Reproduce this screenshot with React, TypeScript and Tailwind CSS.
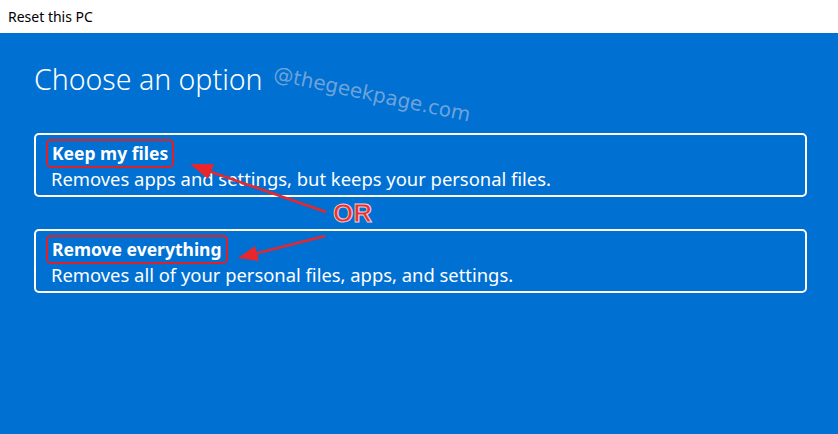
import React from 'react';

const options = [
  { title: 'Keep my files', detail: 'Removes apps and settings, but keeps your personal files.' },
  { title: 'Remove everything', detail: 'Removes all of your personal files, apps, and settings.' },
];

export default function App() {
  return (
    <div className="relative w-[838px] h-[434px] overflow-hidden flex flex-col" style={{ fontFamily: '"Noto Sans", "Open Sans", sans-serif' }}>
      {/* Title bar */}
      <div className="h-[33px] bg-white flex items-center px-[8px] text-[14px] text-black shrink-0">
        Reset this PC
      </div>

      {/* Recovery screen */}
      <div className="flex-1 bg-[#0170d3] px-[34px] pt-[25px] text-white">
        <h1 className="text-[28.5px] font-light leading-[42px] mb-[33px]">Choose an option</h1>
        <div className="flex flex-col gap-[32px] w-[773px]">
          {options.map((o) => (
            <div key={o.title} className="border-2 border-white rounded-[5px] h-[64px] pl-[10px] pt-[4px] flex flex-col items-start">
              <span className="border-2 border-[#e02028] rounded-[5px] h-[29px] px-[4px] text-[17.5px] font-bold leading-[24px]">
                {o.title}
              </span>
              <span className="pl-[5px] text-[18.4px] leading-[22px]">{o.detail}</span>
            </div>
          ))}
        </div>
      </div>

      {/* Watermark */}
      <div
        className="absolute left-[274px] top-[58px] text-[20px] text-[#9fbbdc]/70 rotate-[12deg] origin-left"
        style={{ fontFamily: '"DejaVu Sans", Verdana, sans-serif' }}
      >
        @thegeekpage.com
      </div>

      {/* Arrows */}
      <svg className="absolute left-0 top-0" width="838" height="434">
        <line x1="326" y1="212" x2="200" y2="168" stroke="#e8262b" strokeWidth="2.5" />
        <path d="M190 164 L214 164 L208 179 Z" fill="#e8262b" />
        <line x1="325" y1="236" x2="250" y2="255" stroke="#e8262b" strokeWidth="2.5" />
        <path d="M238 258 L255 246 L259 261 Z" fill="#e8262b" />
      </svg>

      {/* OR label */}
      <div
        className="absolute left-[333px] top-[198px] text-[26px] font-bold text-[#e8312f] leading-[30px]"
        style={{ fontFamily: '"Liberation Sans", Arial, sans-serif', WebkitTextStroke: '1px #f3c9c9' }}
      >
        OR
      </div>
    </div>
  );
}
